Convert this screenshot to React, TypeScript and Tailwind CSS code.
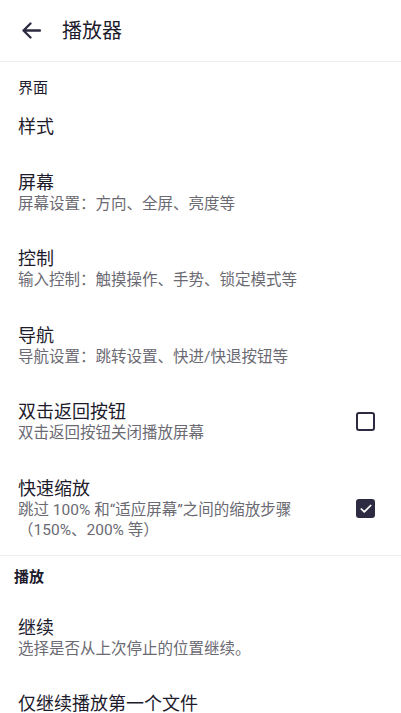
import { Check } from 'lucide-react';

const font = { fontFamily: 'Roboto, "Noto Sans CJK SC", "Noto Sans", sans-serif' };

type Item = { title: string; sub?: string[]; check?: boolean };

function Row({ title, sub, check }: Item) {
  return (
    <div className="flex items-center pl-[18px] pr-[26px] py-[16.5px]">
      <div className="flex-1 min-w-0">
        <div className="text-[18px] leading-[23px] text-[#1d1b2c]">{title}</div>
        {sub && sub.map((s, i) => (
          <div key={i} className="text-[15.5px] leading-[20.5px] text-[#6b6a73]">{s}</div>
        ))}
      </div>
      {check !== undefined && (
        <div
          className={
            'w-[19px] h-[19px] rounded-[3px] border-2 border-[#2d2b42] flex items-center justify-center ' +
            (check ? 'bg-[#2d2b42]' : 'bg-white')
          }
        >
          {check && <Check className="w-[14px] h-[14px] text-white" strokeWidth={3} />}
        </div>
      )}
    </div>
  );
}

export default function App() {
  return (
    <div className="w-[401px] h-[713px] bg-white overflow-hidden rounded-b-[14px]" style={font}>
      <div className="h-[62px] flex items-center border-b border-[#ececef]">
        <div className="w-[62px] pl-[22px] flex items-center">
          <svg width="19" height="17" viewBox="0 0 19 17" fill="none" stroke="#2d2b42" strokeWidth="2.3" strokeLinecap="round" strokeLinejoin="round">
            <path d="M18 8.5H1.5M8.5 1.5L1.5 8.5L8.5 15.5" />
          </svg>
        </div>
        <span className="text-[20px] text-[#1d1b2c]">播放器</span>
      </div>
      <div className="pl-[18px] pt-[16px] text-[15px] leading-[20px] text-[#1d1b2c]">界面</div>
      <Row title="样式" />
      <Row title="屏幕" sub={['屏幕设置：方向、全屏、亮度等']} />
      <Row title="控制" sub={['输入控制：触摸操作、手势、锁定模式等']} />
      <Row title="导航" sub={['导航设置：跳转设置、快进/快退按钮等']} />
      <Row title="双击返回按钮" sub={['双击返回按钮关闭播放屏幕']} check={false} />
      <Row title="快速缩放" sub={['跳过 100% 和“适应屏幕”之间的缩放步骤', '（150%、200% 等）']} check={true} />
      <div className="border-t border-[#ececef] -mt-[2.5px]" />
      <div className="pl-[14px] pt-[11px] text-[15px] leading-[20px] font-bold text-[#1d1b2c]">播放</div>
      <div className="mt-[12.5px]">
        <Row title="继续" sub={['选择是否从上次停止的位置继续。']} />
        <Row title="仅继续播放第一个文件" />
      </div>
    </div>
  );
}
